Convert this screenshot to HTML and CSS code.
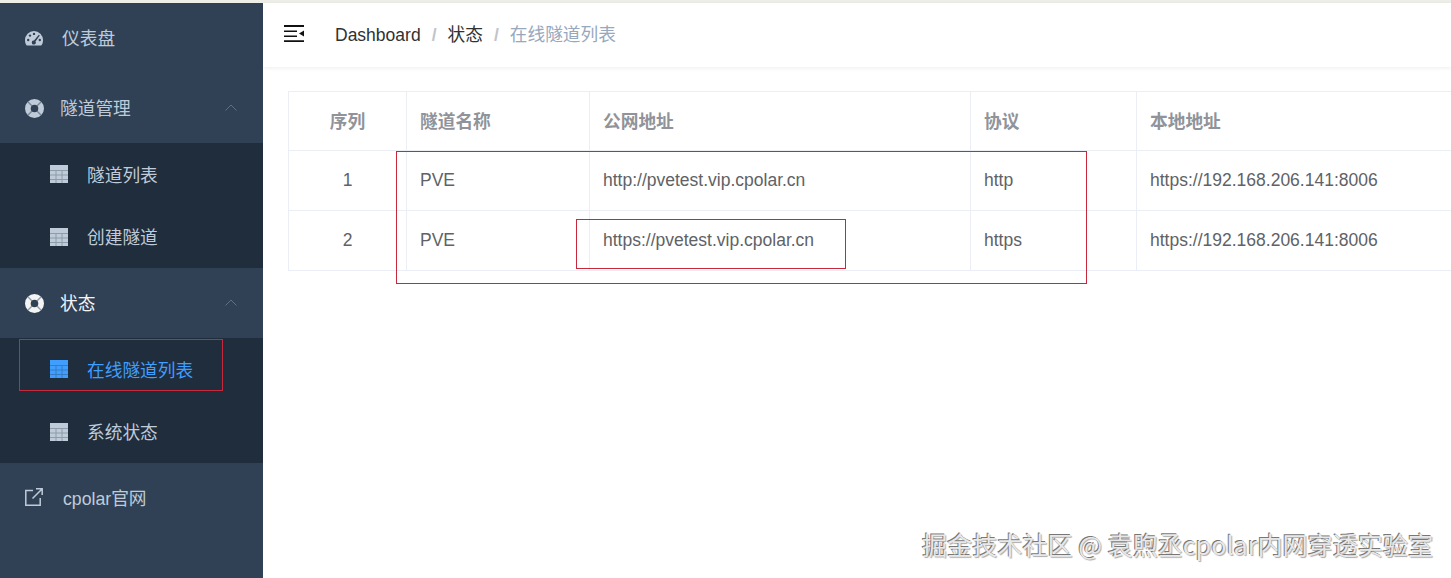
FILE: index.html
```html
<!DOCTYPE html>
<html lang="zh-CN">
<head>
<meta charset="utf-8">
<title>在线隧道列表</title>
<link rel="stylesheet" href="styles.css">
</head>
<body>
<svg class="defs" width="0" height="0" aria-hidden="true">
  <symbol id="i-grid" viewBox="0 0 18 18">
    <path fill="currentColor" d="M0 0h18v18H0z"/>
    <path fill="#1f2d3d" fill-opacity=".3" d="M0 5h18v1H0zM0 9.500h18v1H0zM0 14h18v1H0zM5.500 5h1v13h-1zM11.500 5h1v13h-1z"/>
  </symbol>
  <symbol id="i-buoy" viewBox="0 0 20 20">
    <path fill="currentColor" fill-rule="evenodd" d="M10 0a10 10 0 1 1 0 20a10 10 0 0 1 0-20zM10 6a4 4 0 1 0 0 8a4 4 0 0 0 0-8z"/>
    <path fill="#304156" fill-opacity=".5" transform="rotate(45 10 10)" d="M9.300 0h1.400v6H9.300zM9.300 14h1.400v6H9.300zM0 9.300h6v1.400H0zM14 9.300h6v1.400h-6z"/>
  </symbol>
  <symbol id="i-up" viewBox="0 0 12 7">
    <path fill="none" stroke="currentColor" d="M.5 6.500L6 1l5.500 5.500"/>
  </symbol>
</svg>
<div class="layout">
  <aside class="sidebar">
    <a class="item">
      <svg class="ico gauge" viewBox="0 0 18 15"><path fill="currentColor" d="M9 0a9 9 0 0 1 9 9c0 2.300-.6 4.200-1.800 5.600H1.800C.6 13.200 0 11.300 0 9a9 9 0 0 1 9-9z"/><g fill="#304156"><circle cx="3.200" cy="9" r="1.200"/><circle cx="5" cy="4.600" r="1.200"/><circle cx="9" cy="2.900" r="1.200"/><circle cx="14.800" cy="9" r="1.200"/><path d="M13.800 3.800l1 .7-4.300 6a2 2 0 1 1-1.500-1z"/></g></svg>
      <span class="label">仪表盘</span>
    </a>
    <a class="item group">
      <svg class="ico buoy"><use href="#i-buoy"/></svg>
      <span class="label">隧道管理</span>
      <svg class="arrow"><use href="#i-up"/></svg>
    </a>
    <div class="submenu">
      <a class="subitem"><svg class="grid"><use href="#i-grid"/></svg><span>隧道列表</span></a>
      <a class="subitem"><svg class="grid"><use href="#i-grid"/></svg><span>创建隧道</span></a>
    </div>
    <a class="item group open">
      <svg class="ico buoy"><use href="#i-buoy"/></svg>
      <span class="label">状态</span>
      <svg class="arrow"><use href="#i-up"/></svg>
    </a>
    <div class="submenu">
      <a class="subitem active"><svg class="grid"><use href="#i-grid"/></svg><span>在线隧道列表</span></a>
      <a class="subitem"><svg class="grid"><use href="#i-grid"/></svg><span>系统状态</span></a>
    </div>
    <a class="item">
      <svg class="ico link" viewBox="0 0 18 18"><path fill="none" stroke="currentColor" stroke-width="1.500" d="M8 2.500H.8v14.700h14.400V10M7.500 10.500L16.500 1.500M11 .8h6.200V7"/></svg>
      <span class="label">cpolar官网</span>
    </a>
  </aside>
  <main class="main">
    <header class="navbar">
      <svg class="hamburger" viewBox="0 0 20 17"><path fill="#111" d="M0 0h20v2H0zM0 5.500h13V7H0zM0 10.500h13V12H0zM0 15.300h20V17H0zM20 5.500v6l-5-3z"/></svg>
      <nav class="crumbs">
        <span class="crumb">Dashboard</span><span class="sep">/</span>
        <span class="crumb cjk">状态</span><span class="sep">/</span>
        <span class="crumb cjk current">在线隧道列表</span>
      </nav>
    </header>
    <section class="content">
      <table class="table">
        <colgroup>
          <col class="c1"><col class="c2"><col class="c3"><col class="c4"><col class="c5">
        </colgroup>
        <thead>
          <tr><th class="center">序列</th><th>隧道名称</th><th>公网地址</th><th>协议</th><th>本地地址</th></tr>
        </thead>
        <tbody>
          <tr><td class="center">1</td><td>PVE</td><td>http://pvetest.vip.cpolar.cn</td><td>http</td><td>https://192.168.206.141:8006</td></tr>
          <tr><td class="center">2</td><td>PVE</td><td>https://pvetest.vip.cpolar.cn</td><td>https</td><td>https://192.168.206.141:8006</td></tr>
        </tbody>
      </table>
    </section>
  </main>
</div>
<div class="mark mark-side"></div>
<div class="mark mark-large"></div>
<div class="mark mark-small"></div>
<div class="watermark">掘金技术社区 @ 袁煦丞cpolar内网穿透实验室</div>
</body>
</html>
```
FILE: styles.css
```css
* { box-sizing: border-box; }
html, body { height: 100%; }
body {
  margin: 0;
  padding-top: 3px;
  background: #eeeee8;
  overflow: hidden;
  font-family: "Liberation Sans", "Noto Sans CJK SC", sans-serif;
}
.defs { position: absolute; }
.layout { display: flex; height: 575px; }

.sidebar { flex: 0 0 263px; background: #304156; color: #bfcbd9; font-size: 17.700px; }
.item { display: flex; align-items: center; height: 70px; position: relative; padding-left: 25px; }
.item.open { color: #f4f4f5; }
.item .label { margin-top: -2px; }
.ico { flex: none; display: block; }
.gauge { width: 18px; height: 15px; margin-right: 19px; }
.buoy { width: 19px; height: 19px; margin-right: 16px; }
.link { width: 18px; height: 18px; margin-right: 20px; margin-top: -2px; }
.arrow { position: absolute; left: 225px; top: 31px; width: 12px; height: 7px; color: #5f6f82; }
.submenu { background: #1f2d3d; }
.subitem { display: flex; align-items: center; height: 62.500px; padding-left: 50px; }
.subitem span { margin-left: 19px; margin-top: -1px; }
.grid { width: 18px; height: 18px; flex: none; }
.subitem.active { color: #409eff; }

.main { flex: 1; min-width: 0; background: #fff; }
.navbar {
  display: flex;
  align-items: center;
  height: 64px;
  padding-left: 21px;
  background: #fff;
  box-shadow: 0 1px 4px rgba(0, 21, 41, .08);
  font-size: 17.500px;
  color: #303133;
}
.hamburger { width: 20px; height: 17px; flex: none; margin-top: -4px; }
.crumbs { margin-left: 31px; display: flex; align-items: baseline; margin-top: -5px; }
.sep { color: #c0c4cc; margin: 0 11px; font-weight: 700; }
.cjk { font-size: 17.700px; }
.current { color: #97a8be; }

.content { padding: 24px 0 0 25px; }
.table {
  border-collapse: collapse;
  table-layout: fixed;
  width: 1170px;
  font-size: 17.500px;
  color: #606266;
}
.c1 { width: 118px; }
.c2 { width: 183px; }
.c3 { width: 381px; }
.c4 { width: 166px; }
.c5 { width: 322px; }
.table th, .table td {
  border: 1px solid #ebeef5;
  padding: 0 13px;
  height: 60px;
  text-align: left;
  white-space: nowrap;
}
.table th { color: #909399; font-weight: 700; font-size: 17.700px; height: 59px; padding-bottom: 2px; }
.table .center { text-align: center; }

.mark { position: absolute; border: 1px solid #c8283c; }
.mark-side { left: 19px; top: 339px; width: 204px; height: 52px; }
.mark-large { left: 396px; top: 151px; width: 691px; height: 133px; }
.mark-small { left: 576px; top: 219px; width: 270px; height: 50px; }

.watermark {
  position: absolute;
  left: 922px;
  top: 526px;
  font-family: "Noto Sans CJK SC", "Liberation Sans", sans-serif;
  font-size: 25.100px;
  line-height: 36px;
  white-space: nowrap;
  color: #e8e8e8;
  text-shadow: -1px -1px 0 #777, 1px 1px 1px #aaa;
}
```
